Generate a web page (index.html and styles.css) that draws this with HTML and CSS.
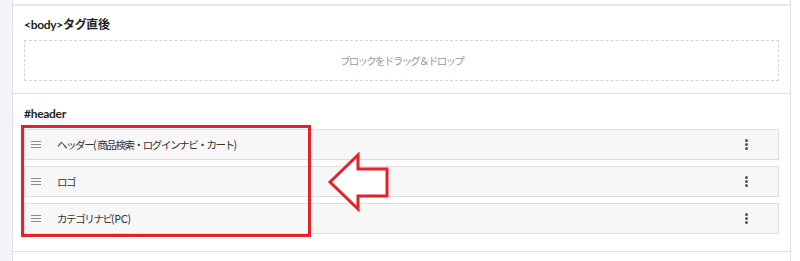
FILE: index.html
```html
<!DOCTYPE html>
<html lang="ja">
<head>
    <meta charset="UTF-8">
    <title>レイアウト管理</title>
    <link rel="stylesheet" href="styles.css">
</head>
<body>
    <div class="page">
        <div class="side"></div>
        <div class="panel">
            <div class="panel__top"></div>

            <div class="section">
                <div class="section__title">&lt;body&gt;タグ直後</div>
                <div class="dropzone">ブロックをドラッグ＆ドロップ</div>
            </div>

            <div class="section section--header">
                <div class="section__title">#header</div>
                <div class="block">
                    <span class="block__handle"><i></i><i></i><i></i></span>
                    <span class="block__name">ヘッダー<span class="lat">(</span>商品検索・ログインナビ・カート<span class="lat">)</span></span>
                    <span class="block__menu"><i></i><i></i><i></i></span>
                </div>
                <div class="block">
                    <span class="block__handle"><i></i><i></i><i></i></span>
                    <span class="block__name">ロゴ</span>
                    <span class="block__menu"><i></i><i></i><i></i></span>
                </div>
                <div class="block">
                    <span class="block__handle"><i></i><i></i><i></i></span>
                    <span class="block__name">カテゴリナビ<span class="lat">(PC)</span></span>
                    <span class="block__menu"><i></i><i></i><i></i></span>
                </div>
            </div>

            <!-- annotation -->
            <div class="mark"></div>
            <svg class="arrow" width="70" height="66" viewBox="0 0 70 66">
                <polygon points="5,32 33,5 33,19 62,19 62,46 33,46 33,59" fill="#fff" stroke="#e8202a" stroke-width="3" stroke-linejoin="miter"/>
            </svg>
        </div>
    </div>
</body>
</html>
```

FILE: styles.css
```css
body {
    margin: 0;
    background: #fff;
    font-family: Lato, "Noto Sans CJK JP", sans-serif;
    color: #333;
}
.page {
    display: flex;
    height: 261px;
}
.side {
    width: 12px;
    background: #f3f4f7;
    border-right: 1px solid #e0e0e0;
}
.panel {
    position: relative;
    width: 777px;
    border-right: 1px solid #e0e0e0;
}
.panel__top {
    height: 4px;
    border-bottom: 2px solid #e8e8e8;
}
.section {
    padding: 11px 11px 12px;
    border-bottom: 1px solid #e0e0e0;
}
.section--header {
    padding: 12px 11px 17px;
}
.section__title {
    font-size: 12px;
    font-weight: bold;
    line-height: 16px;
    margin-bottom: 7px;
    color: #222;
    letter-spacing: -0.3px;
}
.dropzone {
    height: 39px;
    border: 1px dashed #d4d4d4;
    display: flex;
    align-items: center;
    justify-content: center;
    font-size: 10.5px;
    letter-spacing: -1.7px;
    color: #999;
}
.block {
    display: flex;
    align-items: center;
    height: 29px;
    margin-bottom: 6px;
    background: #f7f7f7;
    border: 1px solid #dedede;
    font-size: 10.5px;
    color: #333;
}
.block:last-child {
    margin-bottom: 0;
}
.block__handle {
    display: flex;
    flex-direction: column;
    gap: 2px;
    width: 10px;
    margin: 0 0 0 6px;
}
.block__handle i {
    display: block;
    height: 1px;
    background: #8a8a8a;
}
.block__name {
    margin-left: 16px;
    flex: 1;
    letter-spacing: -1.4px;
}
.block__name .lat {
    letter-spacing: 0;
    margin-right: 1px;
}
.block__menu {
    display: flex;
    flex-direction: column;
    gap: 1px;
    margin-right: 30px;
}
.block__menu i {
    display: block;
    width: 3px;
    height: 3px;
    border-radius: 50%;
    background: #4a5562;
}
.mark {
    position: absolute;
    left: 8px;
    top: 125px;
    width: 284px;
    height: 106px;
    border: 3px solid #e8202a;
}
.arrow {
    position: absolute;
    left: 312px;
    top: 150px;
}
```
